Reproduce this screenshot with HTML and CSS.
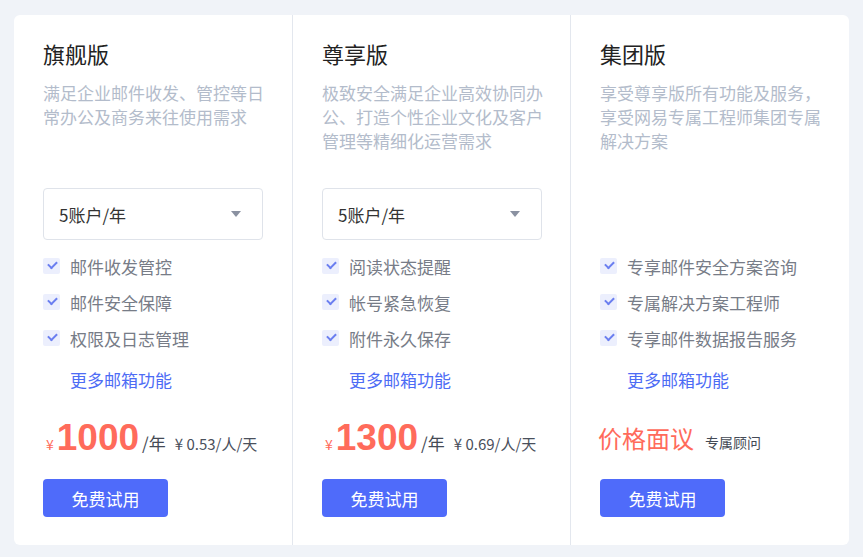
FILE: index.html
```html
<!DOCTYPE html>
<html lang="zh-CN">
<head>
    <meta charset="UTF-8">
    <meta name="viewport" content="width=device-width, initial-scale=1.0">
    <title>企业邮箱版本</title>
    <link rel="stylesheet" href="styles.css">
</head>
<body>

<div class="plans">
    <div class="plan">
        <h2 class="plan-title">旗舰版</h2>
        <p class="plan-desc">满足企业邮件收发、管控等日常办公及商务来往使用需求</p>
        <div class="plan-select">
            <div class="select-box">
                <span>5账户/年</span>
                <span class="select-arrow"></span>
            </div>
        </div>
        <ul class="features">
            <li><span class="check"></span>邮件收发管控</li>
            <li><span class="check"></span>邮件安全保障</li>
            <li><span class="check"></span>权限及日志管理</li>
        </ul>
        <a class="more-link" href="#">更多邮箱功能</a>
        <div class="price">
            <span class="currency">¥</span>
            <span class="amount">1000</span>
            <span class="unit">/年</span>
            <span class="per-day">¥ 0.53/人/天</span>
        </div>
        <button class="trial-btn">免费试用</button>
    </div>

    <div class="plan">
        <h2 class="plan-title">尊享版</h2>
        <p class="plan-desc">极致安全满足企业高效协同办公、打造个性企业文化及客户管理等精细化运营需求</p>
        <div class="plan-select">
            <div class="select-box">
                <span>5账户/年</span>
                <span class="select-arrow"></span>
            </div>
        </div>
        <ul class="features">
            <li><span class="check"></span>阅读状态提醒</li>
            <li><span class="check"></span>帐号紧急恢复</li>
            <li><span class="check"></span>附件永久保存</li>
        </ul>
        <a class="more-link" href="#">更多邮箱功能</a>
        <div class="price">
            <span class="currency">¥</span>
            <span class="amount">1300</span>
            <span class="unit">/年</span>
            <span class="per-day">¥ 0.69/人/天</span>
        </div>
        <button class="trial-btn">免费试用</button>
    </div>

    <div class="plan">
        <h2 class="plan-title">集团版</h2>
        <p class="plan-desc">享受尊享版所有功能及服务，享受网易专属工程师集团专属解决方案</p>
        <div class="plan-select"></div>
        <ul class="features">
            <li><span class="check"></span>专享邮件安全方案咨询</li>
            <li><span class="check"></span>专属解决方案工程师</li>
            <li><span class="check"></span>专享邮件数据报告服务</li>
        </ul>
        <a class="more-link" href="#">更多邮箱功能</a>
        <div class="price">
            <span class="negotiable">价格面议</span>
            <span class="advisor">专属顾问</span>
        </div>
        <button class="trial-btn">免费试用</button>
    </div>
</div>

</body>
</html>
```

FILE: styles.css
```css
body {
    margin: 0;
    padding: 15px 14px;
    background-color: #f0f3f8;
    font-family: "Noto Sans CJK SC", "Noto Sans", sans-serif;
}

.plans {
    display: grid;
    grid-template-columns: 279px 278px 278px;
    width: 835px;
    background-color: #fff;
    border-radius: 6px;
}

.plan {
    display: flex;
    flex-direction: column;
    align-items: flex-start;
    padding: 23px 20px 28px 29px;
    border-right: 1px solid #e3e7ee;
}

.plan:last-child {
    border-right: none;
}

.plan-title {
    margin: 0;
    font-size: 22px;
    line-height: 30px;
    font-weight: normal;
    color: #222;
}

.plan-desc {
    margin: 13px 0 0;
    width: 224px;
    height: 107px;
    font-size: 17px;
    line-height: 24px;
    color: #b3bccb;
}

.plan-select {
    height: 52px;
    width: 220px;
}

.select-box {
    display: flex;
    align-items: center;
    justify-content: space-between;
    box-sizing: border-box;
    height: 52px;
    padding: 0 21px 0 15px;
    border: 1px solid #dfe3ea;
    border-radius: 4px;
    font-size: 17px;
    color: #333;
}

.select-arrow {
    width: 0;
    height: 0;
    border-left: 5px solid transparent;
    border-right: 5px solid transparent;
    border-top: 6px solid #8a91a1;
}

.features {
    list-style: none;
    margin: 8px 0 0;
    padding: 0;
}

.features li {
    display: flex;
    align-items: center;
    height: 36px;
    font-size: 17px;
    color: #777c87;
}

.check {
    position: relative;
    width: 17px;
    height: 16px;
    margin-right: 10px;
    border-radius: 2px;
    background-color: #eceffd;
}

.check::after {
    content: "";
    position: absolute;
    left: 5px;
    top: 3px;
    width: 7px;
    height: 4px;
    border-left: 2px solid #6a7ef0;
    border-bottom: 2px solid #6a7ef0;
    transform: rotate(-45deg);
}

.more-link {
    margin: 6px 0 0 27px;
    line-height: 36px;
    font-size: 17px;
    color: #4d6cf5;
    text-decoration: none;
}

.price {
    display: flex;
    align-items: baseline;
    height: 48px;
    margin-top: 16px;
    white-space: nowrap;
}

.currency {
    margin: 0 3px 0 3px;
    font-size: 14px;
    color: #ff6b5b;
}

.amount {
    font-family: "Liberation Sans", Arial, sans-serif;
    font-size: 37px;
    line-height: 48px;
    font-weight: bold;
    color: #ff6b5b;
}

.unit {
    margin-left: 3px;
    font-size: 17px;
    color: #444a55;
}

.per-day {
    margin-left: 9px;
    font-size: 15px;
    color: #4a505c;
}

.negotiable {
    margin-left: -2px;
    font-size: 24px;
    line-height: 48px;
    color: #ff6b5b;
}

.advisor {
    margin-left: 11px;
    font-size: 14px;
    color: #444a55;
}

.trial-btn {
    margin-top: 17px;
    width: 125px;
    height: 38px;
    border: none;
    border-radius: 4px;
    background-color: #4f6bfa;
    color: #fff;
    font-family: inherit;
    font-size: 17px;
    cursor: pointer;
}
```
